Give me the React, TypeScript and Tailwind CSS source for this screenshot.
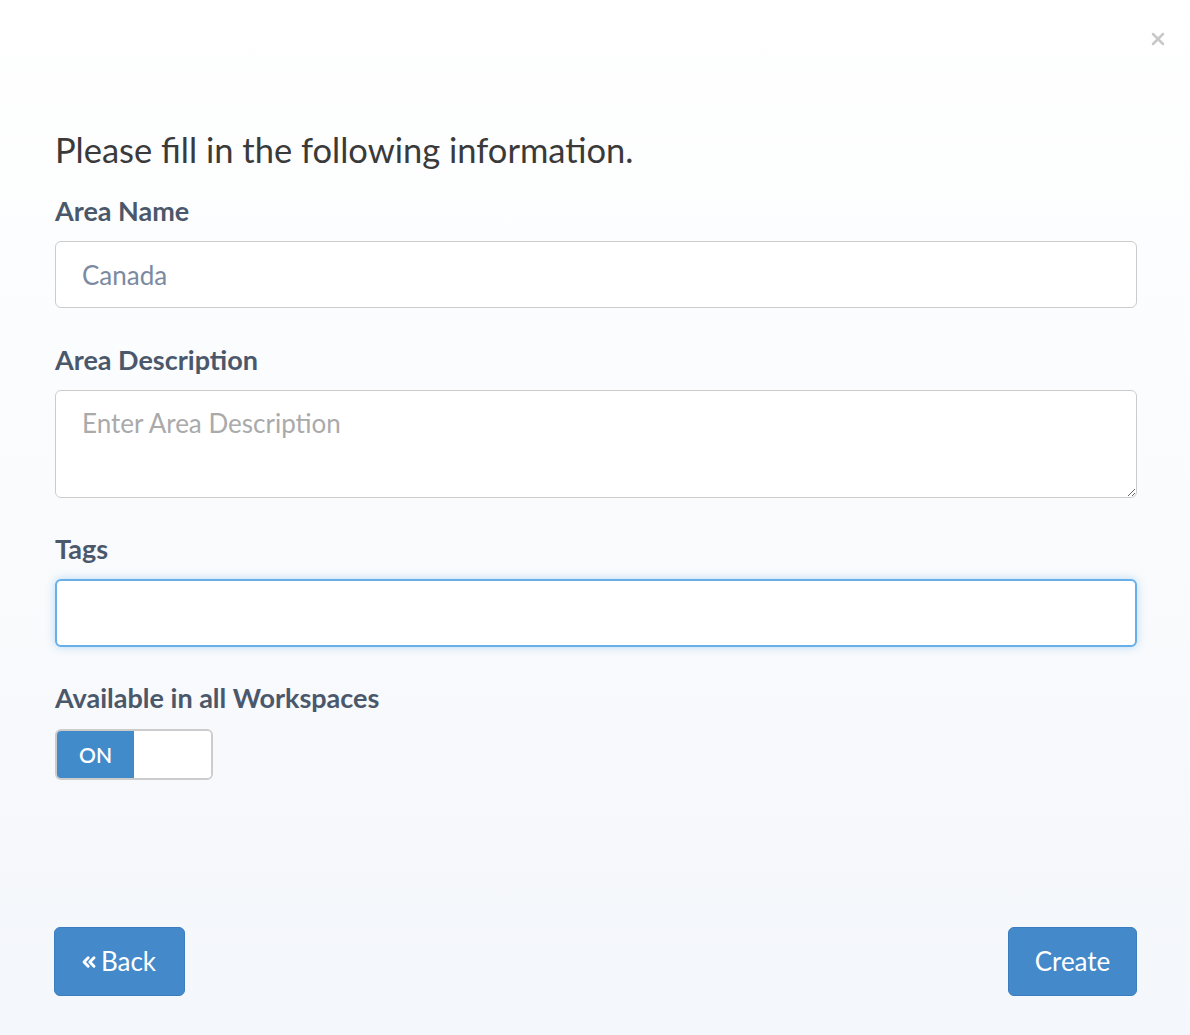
import { X, ChevronsLeft } from "lucide-react";

const labelCls = "block text-[27px] font-bold leading-[30px] text-[#4b586b]";

export default function App() {
    return (
        <main
            className="relative flex h-[1035px] w-full flex-col bg-gradient-to-b from-white to-[#f4f7fb] pl-[55px] pr-[53px] text-[#333]"
            style={{ fontFamily: "Lato, 'Noto Sans', sans-serif" }}
        >
            <div className="-mr-[31px] flex justify-end pt-[29px]">
                <button className="text-[#c8c8c8]">
                    <X size={20} strokeWidth={3} />
                </button>
            </div>

            <h1 className="mt-[81px] text-[34.5px] leading-[40px] font-normal text-[#3a3a3a]">
                Please fill in the following information.
            </h1>

            <form className="mt-[26px] flex flex-col">
                <label className={labelCls}>Area Name</label>
                <input
                    type="text"
                    defaultValue="Canada"
                    className="mt-[15px] h-[67px] w-full rounded-[6px] border border-[#cccccc] bg-white px-[26px] text-[26px] text-[#7b8aa0] outline-none"
                />

                <label className={`${labelCls} mt-[37px]`}>Area Description</label>
                <textarea
                    placeholder="Enter Area Description"
                    className="mt-[15px] h-[108px] w-full resize-y rounded-[6px] border border-[#cccccc] bg-white px-[26px] py-[16px] text-[26px] leading-[32px] text-[#555] outline-none placeholder:text-[#aaaaaa]"
                />

                <label className={`${labelCls} mt-[36px]`}>Tags</label>
                <input
                    type="text"
                    className="mt-[15px] h-[68px] w-full rounded-[6px] border-2 border-[#66afe9] bg-white px-[26px] text-[26px] outline-none shadow-[0_0_8px_rgba(102,175,233,0.45)]"
                />

                <label className={`${labelCls} mt-[36px]`}>Available in all Workspaces</label>
                <div className="mt-[16px] flex h-[51px] w-[158px] overflow-hidden rounded-[6px] border-2 border-[#cccccc] bg-white">
                    <span className="flex w-[77px] items-center justify-center bg-[#428bca] text-[21px] font-semibold text-white">
                        ON
                    </span>
                    <span className="flex-1 bg-white" />
                </div>
            </form>

            <div className="mt-auto mb-[39px] flex items-center justify-between">
                <button className="-ml-px flex h-[69px] w-[131px] items-center justify-center gap-[2px] rounded-[6px] border border-[#3b7dbf] bg-[#4489ca] pr-[4px] text-[26px] text-white">
                    <ChevronsLeft size={20} strokeWidth={3.5} />
                    Back
                </button>
                <button className="flex h-[69px] w-[129px] items-center justify-center rounded-[6px] border border-[#3b7dbf] bg-[#4489ca] text-[26px] text-white">
                    Create
                </button>
            </div>
        </main>
    );
}
